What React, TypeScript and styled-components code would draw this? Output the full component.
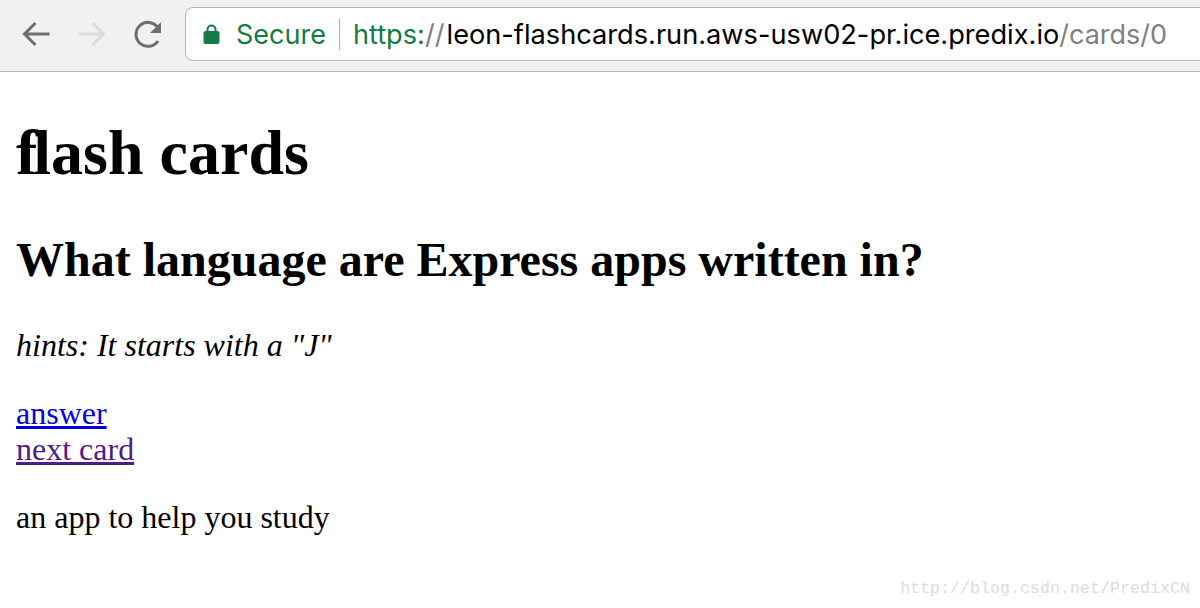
import React from "react";
import styled, { createGlobalStyle } from "styled-components";

const Global = createGlobalStyle`
  html, body { margin: 0; padding: 0; background: #fff; }
  body { font-family: "Liberation Serif", "Times New Roman", serif; font-size: 32px; line-height: 36px; color: #000; overflow: hidden; }
`;

const Page = styled.div`
  position: relative;
  width: 1200px;
  height: 608px;
  overflow: hidden;
`;

const Toolbar = styled.header`
  display: flex;
  align-items: center;
  box-sizing: border-box;
  height: 72px;
  padding: 7px 0 11px 18px;
  background: #f1f1f1;
  border-bottom: 1px solid #b8b8b8;
`;

const NavIcon = styled.svg`
  display: block;
  width: 36px;
  height: 36px;
  margin-right: 20px;
  fill: none;
  flex: none;
`;

const Omnibox = styled.div`
  display: flex;
  align-items: center;
  flex: 1;
  box-sizing: border-box;
  height: 54px;
  margin-left: -1px;
  margin-right: -10px;
  padding: 2px 0 0 17px;
  background: #fff;
  border: 1px solid #b4b4b4;
  border-radius: 8px 0 0 8px;
  font-family: Inter, "Liberation Sans", sans-serif;
  font-size: 27px;
  line-height: 34px;
  white-space: nowrap;
`;

const Lock = styled.svg`
  display: block;
  width: 17px;
  height: 20px;
  margin: -2px 16px 0 0;
  flex: none;
`;

const Secure = styled.span`
  color: #137b43;
`;

const Divider = styled.span`
  width: 1px;
  height: 32px;
  margin: -2px 13px 0;
  background: #b4b4b4;
  flex: none;
`;

const Address = styled.span`
  font-size: 27.2px;
`;
const Scheme = styled.span`
  color: #137b43;
`;
const Slashes = styled.span`
  color: #808080;
  margin-right: 2px;
`;
const Host = styled.span`
  color: #000;
`;
const Path = styled.span`
  color: #808080;
  font-size: 27px;
`;

const Content = styled.main`
  padding: 0 16px;
`;

const Title = styled.h1`
  margin: 45px 0 0;
  font-size: 64px;
  line-height: 72px;
  font-weight: 700;
`;

const TitleJoin = styled.span`
  letter-spacing: -4px;
`;

const Question = styled.h2`
  margin: 44px 0 0;
  font-size: 48px;
  line-height: 54px;
  font-weight: 700;
`;

const Hint = styled.p`
  margin: 40px 0 0;
  font-style: italic;
`;

const Links = styled.div`
  margin-top: 32px;
`;

const CardLink = styled.a<{ $visited?: boolean }>`
  display: table;
  color: ${(p) => (p.$visited ? "#4f1a8c" : "#0000ee")};
  text-decoration: underline;
`;

const Tagline = styled.p`
  margin: 32px 0 0;
`;

const Watermark = styled.div`
  position: absolute;
  right: 10px;
  bottom: 9px;
  font-family: "Liberation Mono", monospace;
  font-size: 16.67px;
  line-height: 20px;
  color: #dcdcd8;
`;

export default function App() {
  return (
    <Page>
      <Global />
      <Toolbar>
        <NavIcon viewBox="0 0 36 36">
          <path d="M31.5 18H7M17.5 7 6.5 18l11 11" stroke="#6e6e6e" strokeWidth="3" />
        </NavIcon>
        <NavIcon viewBox="0 0 36 36">
          <path d="M4.5 18H29M18.5 7l11 11-11 11" stroke="#dcdcdc" strokeWidth="3" />
        </NavIcon>
        <NavIcon viewBox="0 0 36 36">
          <path d="M28 25a12 12 0 1 1-.5-14" stroke="#6e6e6e" strokeWidth="3" />
          <path d="M31 6v11H20z" fill="#6e6e6e" />
        </NavIcon>
        <Omnibox>
          <Lock viewBox="0 0 17 20">
            <path d="M4.5 8V5.500a4 4 0 0 1 8 0V8" fill="none" stroke="#137b43" strokeWidth="2" />
            <rect x="0.5" y="7" width="16" height="13" rx="2" fill="#137b43" />
          </Lock>
          <Secure>Secure</Secure>
          <Divider />
          <Address>
            <Scheme>https:</Scheme>
            <Slashes>//</Slashes>
            <Host>leon-flashcards.run.aws-usw02-pr.ice.predix.io</Host>
            <Path>/cards/0</Path>
          </Address>
        </Omnibox>
      </Toolbar>
      <Content>
        <Title><TitleJoin>f</TitleJoin>lash cards</Title>
        <Question>What language are Express apps written in?</Question>
        <Hint>hints: It starts with a "J"</Hint>
        <Links>
          <CardLink href="#answer">answer</CardLink>
          <CardLink href="#next" $visited>next card</CardLink>
        </Links>
        <Tagline>an app to help you study</Tagline>
      </Content>
      <Watermark>http://blog.csdn.net/PredixCN</Watermark>
    </Page>
  );
}
